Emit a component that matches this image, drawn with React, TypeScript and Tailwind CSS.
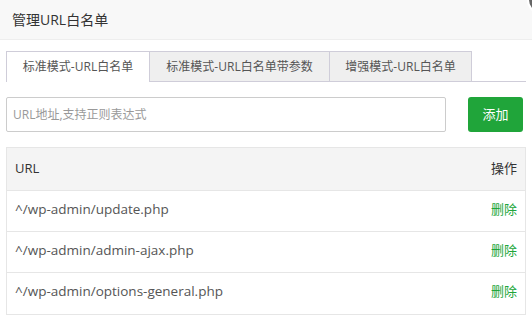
import React from "react";

const rows = [
  "^/wp-admin/update.php",
  "^/wp-admin/admin-ajax.php",
  "^/wp-admin/options-general.php",
];

export default function App() {
  const font = {
    fontFamily:
      '"Open Sans", "Noto Sans CJK SC", "Noto Sans", sans-serif',
  };
  return (
    <div
      className="relative w-[532px] h-[323px] bg-white overflow-hidden"
      style={font}
    >
      <div className="h-[40px] bg-[#f8f8f8] border-b border-[#eeeeee] flex items-center pl-[12px] text-[14px] text-[#333]">
        管理URL白名单
      </div>
      <div className="absolute left-[527px] top-[-14px] w-[28px] h-[28px] rounded-full bg-[#666] border-2 border-white"></div>
      <div className="px-[6px] pt-[11px] w-[532px]">
        <div className="flex w-[520px] border-b border-[#cfcdd9] h-[31px]">
          <div className="w-[143px] h-[31px] -mb-px bg-white border-t border-l border-[#cfcdd9] flex items-center justify-center text-[12px] text-[#555]">
            标准模式-URL白名单
          </div>
          <div className="w-[180px] h-[30px] bg-[#efefef] border-t border-l border-[#cfcdd9] flex items-center justify-center text-[12px] text-[#555]">
            标准模式-URL白名单带参数
          </div>
          <div className="w-[143px] h-[30px] bg-[#efefef] border-t border-l border-r border-[#cfcdd9] flex items-center justify-center text-[12px] text-[#555]">
            增强模式-URL白名单
          </div>
        </div>
        <div className="flex mt-[15px] items-center">
          <input
            className="w-[440px] h-[35px] border border-[#ccc] rounded-[2px] px-[6px] text-[12px] outline-none placeholder:text-[#999]"
            placeholder="URL地址,支持正则表达式"
            style={font}
          />
          <button className="ml-[22px] w-[55px] h-[35px] bg-[#20a53a] text-white text-[13px] rounded-[3px] flex items-center justify-center">
            添加
          </button>
        </div>
        <div className="mt-[15px] w-[520px] border border-[#e6e6e6]">
          <div className="h-[43px] bg-[#f4f4f4] border-b border-[#e6e6e6] flex items-center justify-between px-[8px] text-[13px] text-[#333]">
            <span>URL</span>
            <span>操作</span>
          </div>
          {rows.map((r, i) => (
            <div
              key={r}
              className={`h-[41px] flex justify-between items-start pt-[8px] px-[8px] text-[13.5px] text-[#555] ${
                i < rows.length - 1 ? "border-b border-[#e6e6e6]" : ""
              }`}
            >
              <span>{r}</span>
              <span className="text-[#20a53a] text-[13px] pt-[1px]">删除</span>
            </div>
          ))}
        </div>
      </div>
    </div>
  );
}
